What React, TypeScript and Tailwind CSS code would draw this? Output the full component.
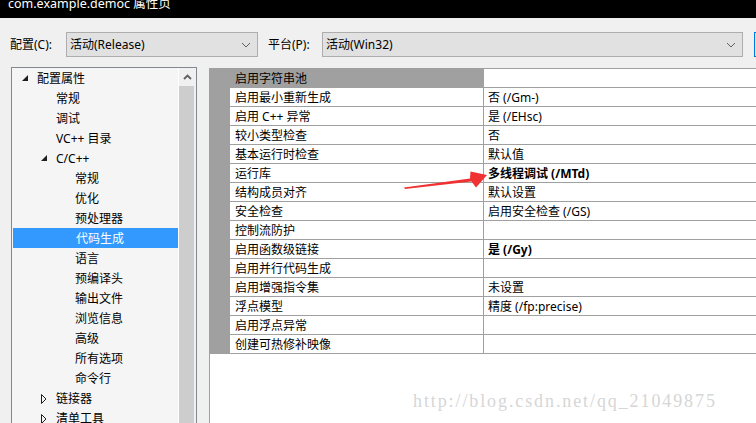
import React from 'react';

type TreeItem = { label: string; level: 0 | 1 | 2; arrow?: 'open' | 'closed'; selected?: boolean };

const treeItems: TreeItem[] = [
  { label: '配置属性', level: 0, arrow: 'open' },
  { label: '常规', level: 1 },
  { label: '调试', level: 1 },
  { label: 'VC++ 目录', level: 1 },
  { label: 'C/C++', level: 1, arrow: 'open' },
  { label: '常规', level: 2 },
  { label: '优化', level: 2 },
  { label: '预处理器', level: 2 },
  { label: '代码生成', level: 2, selected: true },
  { label: '语言', level: 2 },
  { label: '预编译头', level: 2 },
  { label: '输出文件', level: 2 },
  { label: '浏览信息', level: 2 },
  { label: '高级', level: 2 },
  { label: '所有选项', level: 2 },
  { label: '命令行', level: 2 },
  { label: '链接器', level: 1, arrow: 'closed' },
  { label: '清单工具', level: 1, arrow: 'closed' },
];

const levelPad = ['pl-[10px]', 'pl-[29px]', 'pl-[48px]'];

const props: { name: string; value: string; bold?: boolean }[] = [
  { name: '启用字符串池', value: '' },
  { name: '启用最小重新生成', value: '否 (/Gm-)' },
  { name: '启用 C++ 异常', value: '是 (/EHsc)' },
  { name: '较小类型检查', value: '否' },
  { name: '基本运行时检查', value: '默认值' },
  { name: '运行库', value: '多线程调试 (/MTd)', bold: true },
  { name: '结构成员对齐', value: '默认设置' },
  { name: '安全检查', value: '启用安全检查 (/GS)' },
  { name: '控制流防护', value: '' },
  { name: '启用函数级链接', value: '是 (/Gy)', bold: true },
  { name: '启用并行代码生成', value: '' },
  { name: '启用增强指令集', value: '未设置' },
  { name: '浮点模型', value: '精度 (/fp:precise)' },
  { name: '启用浮点异常', value: '' },
  { name: '创建可热修补映像', value: '' },
];

function Chevron() {
  return (
    <svg width="10" height="6" viewBox="0 0 10 6" className="shrink-0">
      <path d="M1 1 L5 5 L9 1" fill="none" stroke="#606060" strokeWidth="1" />
    </svg>
  );
}

function Combo({ text, width }: { text: string; width: string }) {
  return (
    <div className={`${width} shrink-0 h-[25px] flex items-center justify-between bg-[#e1e1e1] border border-[#adadad] pl-[3px] pr-[6px]`}>
      <span className="pt-[1px]">{text}</span>
      <Chevron />
    </div>
  );
}

function Arrow({ kind }: { kind?: 'open' | 'closed' }) {
  if (kind === 'open') {
    return (
      <svg width="15" height="8" viewBox="0 0 15 8" className="shrink-0">
        <polygon points="0,6 6,0 6,6" fill="#1e1e1e" />
      </svg>
    );
  }
  if (kind === 'closed') {
    return (
      <svg width="15" height="10" viewBox="0 0 15 10" className="shrink-0">
        <polygon points="0.5,0.5 5,5 0.5,9.5" fill="none" stroke="#1e1e1e" strokeWidth="1" />
      </svg>
    );
  }
  return <span className="w-[15px] shrink-0" />;
}

export default function App() {
  return (
    <div className="relative w-[756px] h-[423px] overflow-hidden bg-[#f0f0f0] text-[12px] text-black font-['Segoe_UI','Noto_Sans','Noto_Sans_CJK_SC',sans-serif]">
      {/* Title bar */}
      <div className="h-[18px] bg-black overflow-hidden">
        <div className="pl-[8px] -mt-[3px] text-white text-[12.5px] leading-[14px] whitespace-nowrap">com.example.democ 属性页</div>
      </div>

      {/* Toolbar */}
      <div className="flex items-center mt-[14px] h-[25px]">
        <span className="ml-[10px] w-[56px] shrink-0 pt-[1px]">配置(C):</span>
        <Combo text="活动(Release)" width="w-[192px]" />
        <span className="ml-[10px] w-[54px] shrink-0 pt-[1px]">平台(P):</span>
        <Combo text="活动(Win32)" width="w-[421px]" />
        <div className="ml-[11px] w-[40px] h-[25px] shrink-0 border border-[#0078d7] bg-[#e1e1e1]" />
      </div>

      {/* Main */}
      <div className="flex mt-[10px] h-[370px]">
        {/* Tree */}
        <div className="ml-[11px] w-[186px] shrink-0 h-[380px] flex border border-[#828790] bg-[#f5f5f5]">
          <div className="w-[166px] flex flex-col">
            {treeItems.map((it, i) => (
              <div
                key={i}
                className={`h-[20px] shrink-0 flex items-center pt-[2px] ${levelPad[it.level]} ${
                  it.selected ? 'bg-[#3399ff] text-white ml-[1px]' : ''
                }`}
              >
                <Arrow kind={it.arrow} />
                <span className="whitespace-nowrap">{it.label}</span>
              </div>
            ))}
          </div>
          <div className="w-[18px] flex flex-col bg-[#f0f0f0] border-l border-white">
            <div className="h-[18px] flex items-center justify-center">
              <svg width="9" height="6" viewBox="0 0 9 6">
                <path d="M1 5 L4.5 1.5 L8 5" fill="none" stroke="#606060" strokeWidth="1.8" />
              </svg>
            </div>
            <div className="flex-1 w-[15px] bg-[#cdcdcd]" />
          </div>
        </div>

        {/* Property grid */}
        <div className="ml-[12px] flex-1 mt-[1px] bg-white border-l border-t border-[#a0a0a0] min-w-[560px]">
          {props.map((p, i) => (
            <div key={i} className="flex h-[19px]">
              <div className="w-[20px] shrink-0 bg-[#a0a0a0]" />
              <div
                className={`w-[253px] shrink-0 border-b border-[#a0a0a0] pl-[5px] pt-[1px] leading-[17px] whitespace-nowrap ${
                  i === 0 ? 'bg-[#a0a0a0]' : ''
                }`}
              >
                {p.name}
              </div>
              <div
                className={`flex-1 border-b border-l border-[#a0a0a0] pl-[4px] pt-[1px] leading-[17px] whitespace-nowrap ${
                  p.bold ? 'font-bold' : ''
                }`}
              >
                {p.value}
              </div>
            </div>
          ))}
        </div>
      </div>

      {/* Red annotation arrow */}
      <svg className="absolute left-0 top-0 pointer-events-none" width="756" height="423" viewBox="0 0 756 423">
        <polygon
          points="404,187.5 470,178.5 470.5,171.5 487,175 476,187.5 471.5,181.5 405,189"
          fill="#f03232"
        />
      </svg>

      {/* Watermark */}
      <div className="absolute left-[413px] top-[392px] text-[18px] leading-[18px] tracking-[1.9px] text-[#d6d6d6] font-['Liberation_Serif',serif] whitespace-nowrap">
        http://blog.csdn.net/qq_21049875
      </div>
    </div>
  );
}
